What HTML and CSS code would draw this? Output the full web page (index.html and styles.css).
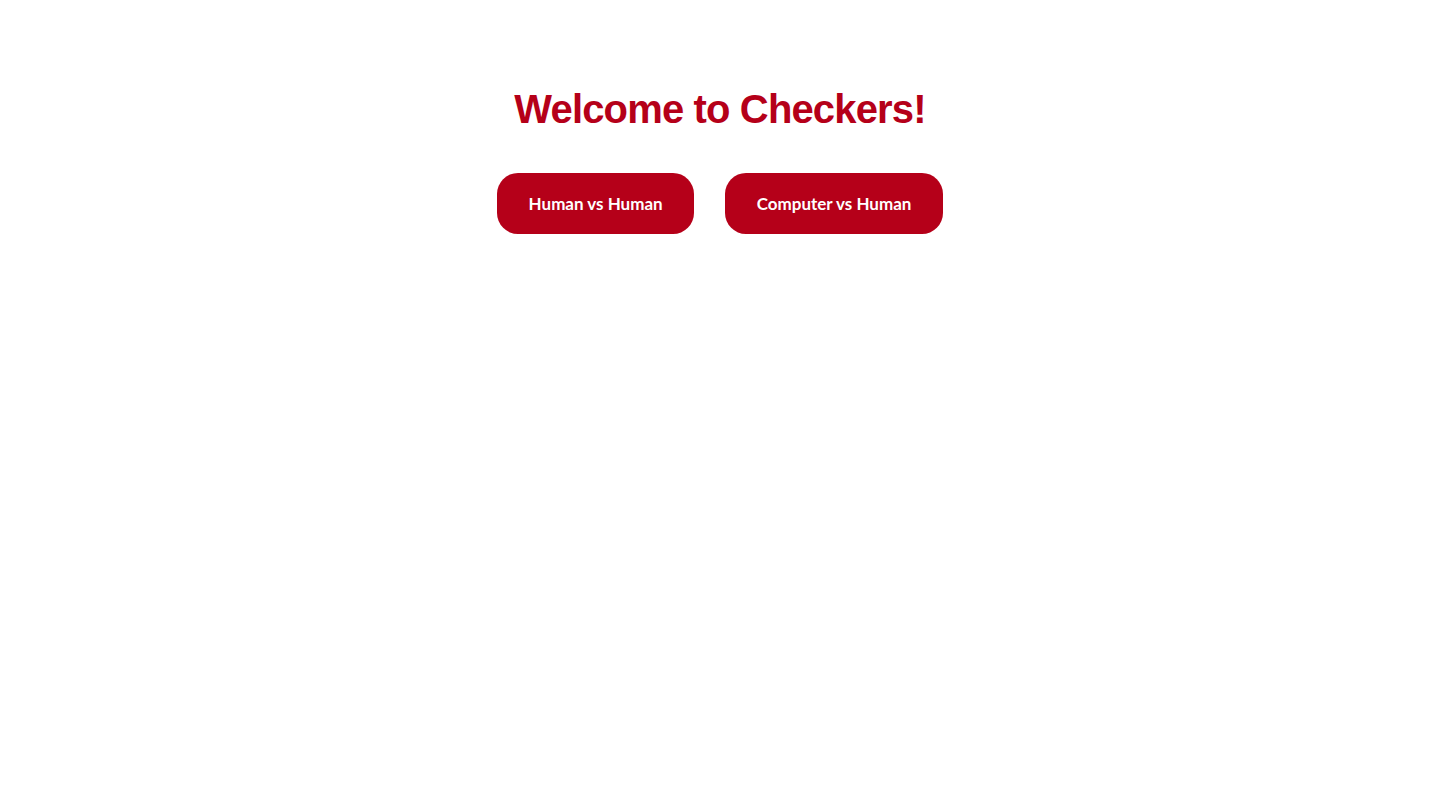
FILE: index.html
```html
<!DOCTYPE html>
<html lang="en">
<head>
<meta charset="utf-8">
<title>Checkers</title>
<link rel="stylesheet" href="styles.css">
</head>
<body>
<main class="menu">
  <h1 class="title">Welcome to Checkers!</h1>
  <div class="actions">
    <button class="btn" type="button">Human vs Human</button>
    <button class="btn" type="button">Computer vs Human</button>
  </div>
</main>
</body>
</html>
```
FILE: styles.css
```css
html, body {
  margin: 0;
  padding: 0;
  background: #ffffff;
}
.menu {
  display: flex;
  flex-direction: column;
  align-items: center;
  padding-top: 86px;
}
.title {
  margin: 0;
  font-family: "Liberation Sans", Arial, sans-serif;
  font-weight: 700;
  font-size: 40px;
  line-height: 46px;
  letter-spacing: -0.85px;
  color: #b50019;
}
.actions {
  display: flex;
  gap: 31px;
  margin-top: 41px;
}
.btn {
  height: 61px;
  padding: 0 31.5px;
  border: none;
  border-radius: 21px;
  background: #b50019;
  color: #ffffff;
  font-family: Lato, "Open Sans", sans-serif;
  font-weight: 700;
  font-size: 17px;
  cursor: pointer;
}
```
